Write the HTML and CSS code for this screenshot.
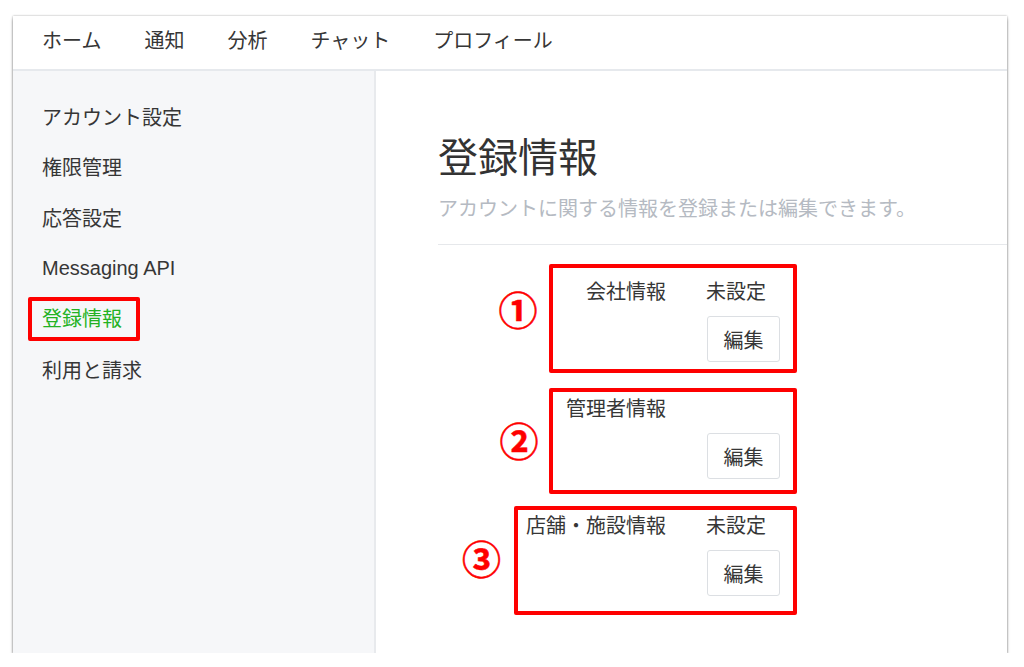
FILE: index.html
```html
<!DOCTYPE html>
<html lang="ja">
<head>
<meta charset="utf-8">
<title>登録情報</title>
<link rel="stylesheet" href="styles.css">
</head>
<body>
<div class="window">
  <nav class="topnav">
    <a class="topnav-item">ホーム</a>
    <a class="topnav-item">通知</a>
    <a class="topnav-item">分析</a>
    <a class="topnav-item">チャット</a>
    <a class="topnav-item">プロフィール</a>
  </nav>
  <div class="body">
    <aside class="sidebar">
      <div class="side-item">アカウント設定</div>
      <div class="side-item">権限管理</div>
      <div class="side-item">応答設定</div>
      <div class="side-item">Messaging API</div>
      <div class="side-item"><span class="side-active">登録情報</span></div>
      <div class="side-item">利用と請求</div>
    </aside>
    <main class="main">
      <header class="page-head">
        <h1 class="page-title">登録情報</h1>
        <p class="page-sub">アカウントに関する情報を登録または編集できます。</p>
      </header>
      <section class="rows">
        <div class="row">
          <div class="row-label">会社情報</div>
          <div class="row-value">
            <div class="row-status">未設定</div>
            <button class="edit-btn">編集</button>
          </div>
        </div>
        <div class="row">
          <div class="row-label">管理者情報</div>
          <div class="row-value">
            <div class="row-status"></div>
            <button class="edit-btn">編集</button>
          </div>
        </div>
        <div class="row">
          <div class="row-label">店舗・施設情報</div>
          <div class="row-value">
            <div class="row-status">未設定</div>
            <button class="edit-btn">編集</button>
          </div>
        </div>

        <div class="mark mark-1"></div>
        <div class="mark mark-2"></div>
        <div class="mark mark-3"></div>
        <span class="num num-1">①</span>
        <span class="num num-2">②</span>
        <span class="num num-3">③</span>
      </section>
    </main>
  </div>
</div>
</body>
</html>
```

FILE: styles.css
```css
html, body {
  margin: 0;
  padding: 0;
  background: #ffffff;
}

body {
  font-family: "Liberation Sans", "Noto Sans CJK JP", sans-serif;
  color: #363636;
}

.window {
  margin: 16px 0 0 13px;
  width: 994px;
  height: 637px;
  background: #ffffff;
  box-shadow: 0 3px 3px rgba(0, 0, 0, 0.35), 0 0 2px rgba(0, 0, 0, 0.35);
  display: flex;
  flex-direction: column;
  overflow: hidden;
}

.topnav {
  height: 49px;
  padding-bottom: 4px;
  border-bottom: 2px solid #e6e9ed;
  display: flex;
  align-items: center;
  gap: 43px;
  padding-left: 29px;
  flex: none;
}

.topnav-item {
  font-size: 20px;
  line-height: 28px;
  color: #363636;
}

.body {
  flex: 1;
  display: flex;
  min-height: 0;
}

.sidebar {
  width: 361px;
  background: #f6f7f9;
  border-right: 2px solid #e8eaed;
  padding-top: 20px;
  flex: none;
}

.side-item {
  height: 50.6px;
  padding-left: 29px;
  font-size: 20px;
  display: flex;
  align-items: center;
  color: #363636;
}

.side-active {
  position: relative;
  color: #23b223;
  line-height: 28px;
  display: inline-block;
}

.side-active::after {
  content: "";
  position: absolute;
  left: -14px;
  right: -18px;
  top: -8px;
  bottom: -8px;
  border: 4px solid #fe0000;
  border-radius: 2px;
}

.main {
  flex: 1;
  padding-left: 62px;
  min-width: 0;
}

.page-head {
  padding-top: 63px;
  padding-bottom: 21px;
  border-bottom: 1px solid #e6e8eb;
}

.page-title {
  margin: 0;
  font-size: 40px;
  line-height: 48px;
  font-weight: normal;
  color: #333333;
}

.page-sub {
  margin: 13px 0 0;
  font-size: 20px;
  line-height: 28px;
  color: #b5bac2;
}

.rows {
  position: relative;
  padding-top: 33px;
  display: flex;
  flex-direction: column;
  gap: 33px;
}

.row {
  display: grid;
  grid-template-columns: 228px 1fr;
  column-gap: 40px;
  font-size: 20px;
  line-height: 28px;
}

.row-label {
  text-align: right;
}

.row-status {
  min-height: 28px;
}

.edit-btn {
  display: block;
  margin-top: 10px;
  margin-left: 1px;
  width: 73px;
  height: 46px;
  padding: 0;
  border: 1px solid #dcdfe3;
  border-radius: 3px;
  background: #ffffff;
  font-family: inherit;
  font-size: 20px;
  color: #363636;
}

.mark {
  position: absolute;
  box-sizing: border-box;
  border: 4px solid #fe0000;
  border-radius: 2px;
}

.mark-1 { left: 111px; top: 19px; width: 248px; height: 109px; }
.mark-2 { left: 111px; top: 143px; width: 248px; height: 106px; }
.mark-3 { left: 76px; top: 261px; width: 283px; height: 109px; }

.num {
  position: absolute;
  width: 40px;
  height: 40px;
  margin-left: -20px;
  margin-top: -20px;
  font-family: "Noto Sans CJK JP", sans-serif;
  font-weight: 700;
  font-size: 39px;
  line-height: 40px;
  text-align: center;
  color: #fe0000;
  -webkit-text-stroke: 0.5px #fe0000;
}

.num-1 { left: 80px; top: 62.5px; }
.num-2 { left: 81px; top: 194px; }
.num-3 { left: 43.5px; top: 312px; }
```
